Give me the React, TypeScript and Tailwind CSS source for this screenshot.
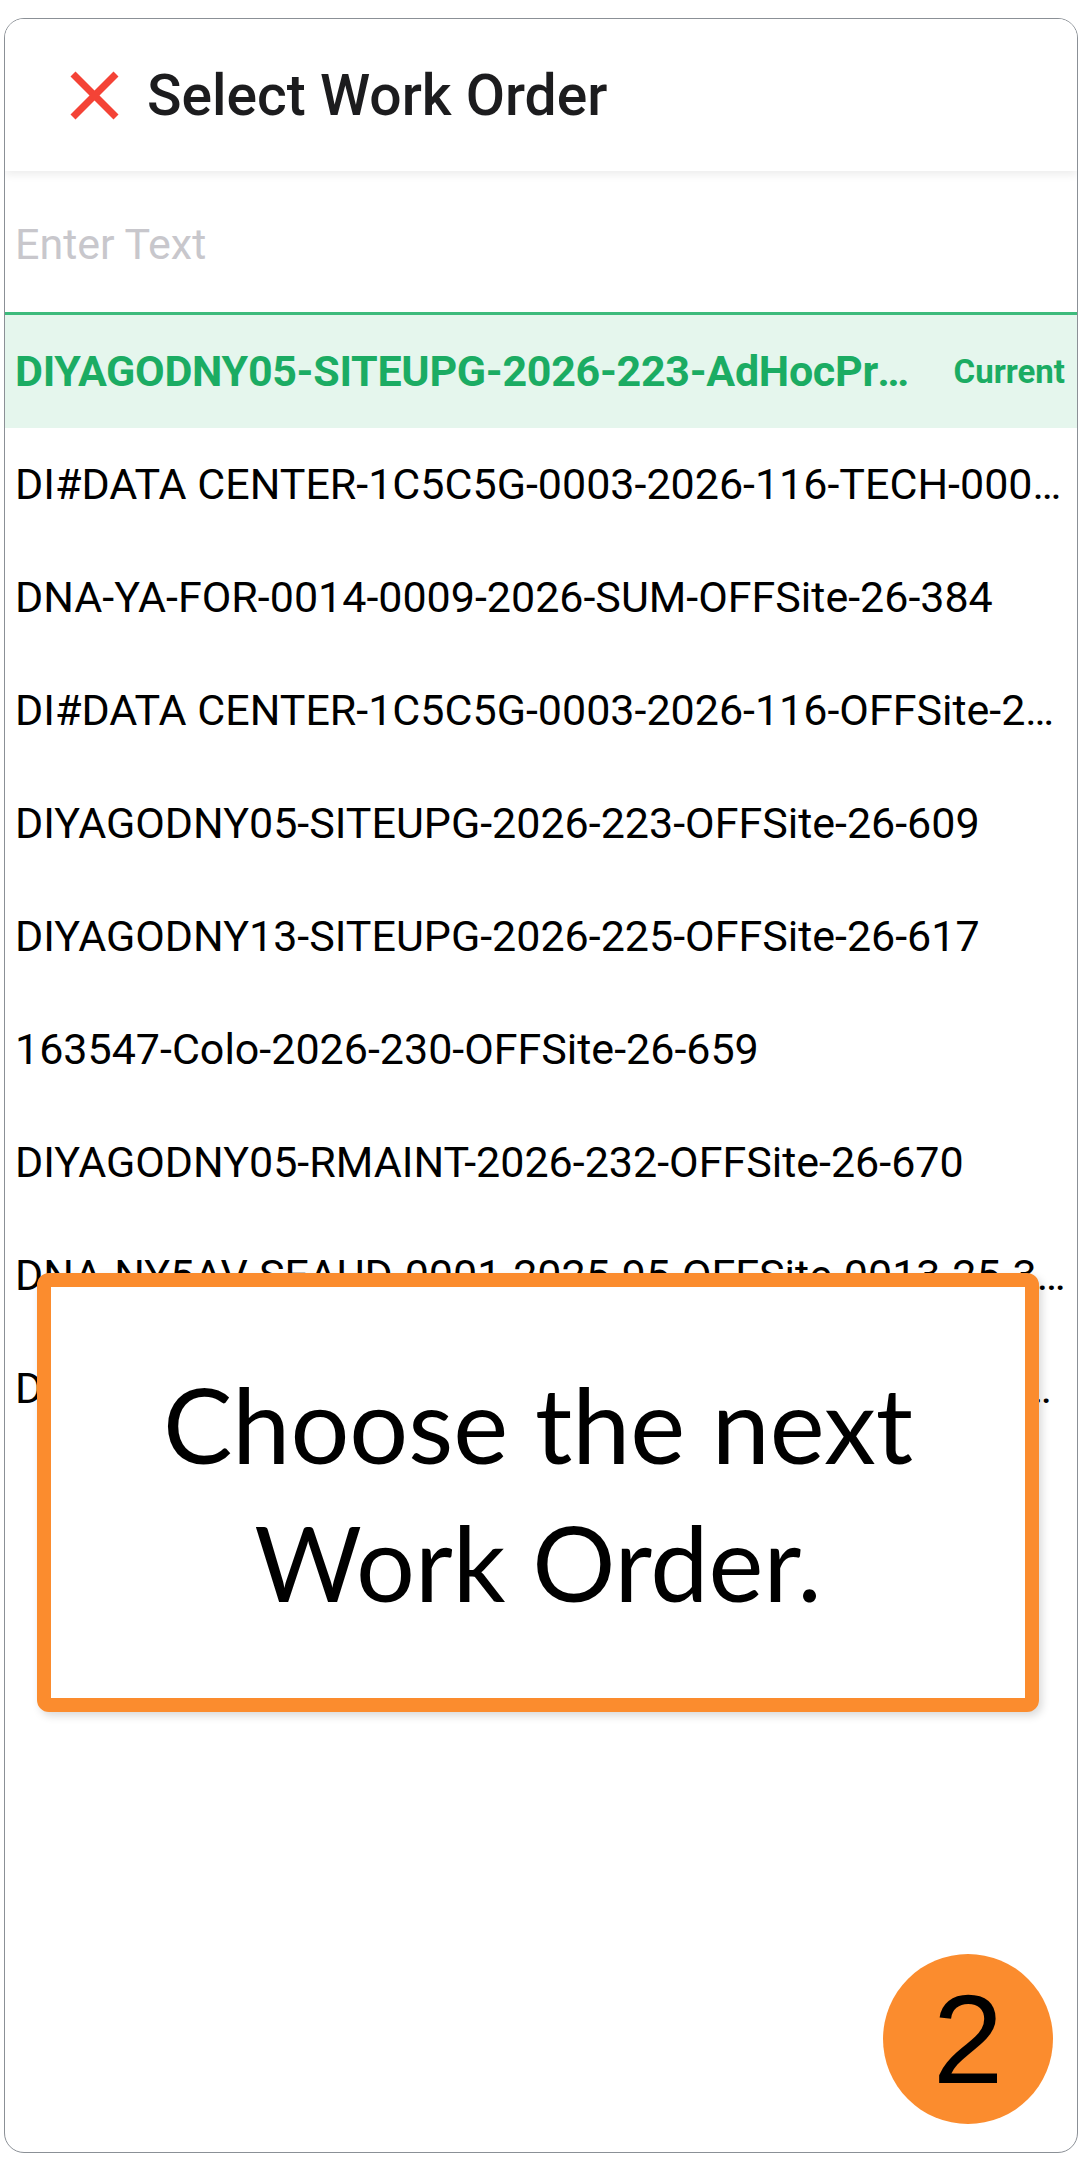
import React from "react";

const ORDERS = [
  "DI#DATA CENTER-1C5C5G-0003-2026-116-TECH-0001-26-375",
  "DNA-YA-FOR-0014-0009-2026-SUM-OFFSite-26-384",
  "DI#DATA CENTER-1C5C5G-0003-2026-116-OFFSite-26-392",
  "DIYAGODNY05-SITEUPG-2026-223-OFFSite-26-609",
  "DIYAGODNY13-SITEUPG-2026-225-OFFSite-26-617",
  "163547-Colo-2026-230-OFFSite-26-659",
  "DIYAGODNY05-RMAINT-2026-232-OFFSite-26-670",
  "DNA-NY5AV-SEAUD-0001-2025-95-OFFSite-0013-25-388",
  "DIYAGODNY13-SITEUPG-2026-225-AdHocProject-26-701",
];

function CloseIcon() {
  return (
    <svg width="49" height="49" viewBox="0 0 49 49" className="shrink-0">
      <line x1="3" y1="3" x2="46" y2="46" stroke="#f44336" strokeWidth="7" />
      <line x1="46" y1="3" x2="3" y2="46" stroke="#f44336" strokeWidth="7" />
    </svg>
  );
}

export default function App() {
  return (
    <div className="relative w-[1080px] h-[2182px] bg-white pt-[18px] pl-[4px] font-['Roboto',sans-serif]">
      {/* card */}
      <div className="w-[1074px] h-[2135px] border-[1.5px] border-[#8b9096] rounded-[20px] overflow-hidden bg-white flex flex-col">
        {/* header */}
        <div className="relative z-10 h-[152px] shrink-0 flex items-center pl-[65px] gap-[28px] bg-white shadow-[0_4px_8px_rgba(0,0,0,0.07)]">
          <CloseIcon />
          <h1 className="text-[57px] font-medium text-[#1c1c1e] leading-none">Select Work Order</h1>
        </div>

        {/* search */}
        <div className="h-[144px] shrink-0 flex items-center px-[10px] pt-[5px] border-b-[3px] border-[#3dbb7c]">
          <input
            placeholder="Enter Text"
            className="w-full bg-transparent outline-none text-[43px] text-black placeholder:text-[#c8c7cc]"
          />
        </div>

        {/* list */}
        <div className="flex flex-col">
          <div className="h-[113px] flex items-center pl-[10px] pr-[12px] bg-[#e5f6ed]">
            <span className="flex-1 min-w-0 truncate text-[43px] font-bold tracking-[-0.3px] text-[#1bac63]">
              DIYAGODNY05-SITEUPG-2026-223-AdHocProject-26-610
            </span>
            <span className="ml-[40px] shrink-0 text-[33px] font-bold text-[#1bac63]">Current</span>
          </div>
          {ORDERS.map((o) => (
            <div key={o} className="h-[113px] flex items-center pl-[10px] pr-[9px]">
              <span className="flex-1 min-w-0 truncate text-[43px] text-black">{o}</span>
            </div>
          ))}
        </div>
      </div>

      {/* callout */}
      <div className="absolute left-[37px] top-[1273px] w-[1002px] h-[439px] border-[14px] border-[#fb8c2e] rounded-[12px] bg-white shadow-[3px_4px_8px_rgba(0,0,0,0.15)] flex items-center justify-center">
        <p className="text-center text-[104px] leading-[138px] text-black font-['Lato',sans-serif]">
          Choose the next
          <br />
          Work Order.
        </p>
      </div>

      {/* step badge */}
      <div className="absolute left-[883px] top-[1954px] w-[170px] h-[170px] rounded-full bg-[#fb8c2e] flex items-center justify-center">
        <span className="text-[127px] leading-none text-black font-['Liberation_Sans',Arial,sans-serif]">2</span>
      </div>
    </div>
  );
}
